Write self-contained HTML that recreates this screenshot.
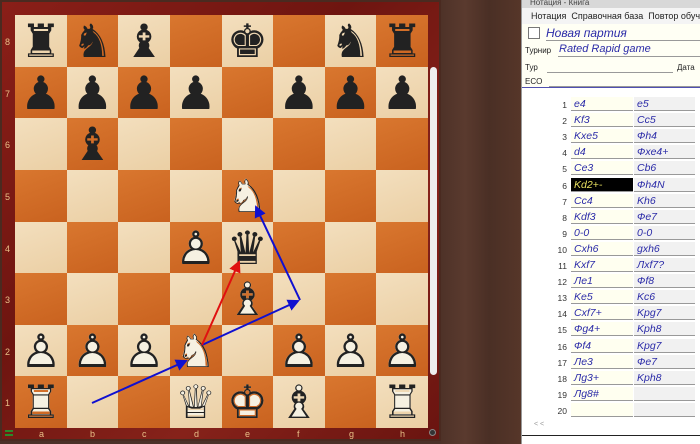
<!DOCTYPE html>
<html><head><meta charset="utf-8"><style>
*{margin:0;padding:0;box-sizing:border-box}
body{width:700px;height:444px;overflow:hidden;background:#4b3128;font-family:"Liberation Sans","DejaVu Sans",sans-serif;position:relative}
#wood{position:absolute;left:441px;top:0;width:80px;height:444px;background:linear-gradient(90deg,#4e3228,#5a3a2e 30%,#4a2f25 60%,#563629)}
#frame{position:absolute;left:0;top:0;width:441px;height:441px;background:linear-gradient(135deg,#8a1f18,#6e1510 40%,#86221a 70%,#6a1410);border:2px solid #4a2a20}
#board{position:absolute;left:15px;top:15px;width:413px;height:413px}
.sq{position:absolute;width:51.625px;height:51.625px}
.l{background:linear-gradient(160deg,#f3dfbe,#ebcfa4)}
.d{background:linear-gradient(160deg,#d9772f,#c9621f)}
.p{position:absolute;width:51.625px;height:51.625px;text-align:center;line-height:52px;font-family:"DejaVu Sans",sans-serif;font-size:46px;font-variant-emoji:text}
.b{color:#222}
.wf{color:#f6f1e2}
.wo{color:#222}
.rk{position:absolute;left:5px;color:#e8c088;font-size:9px}
.fl{position:absolute;top:429px;color:#e8c088;font-size:9px}
#sb{position:absolute;left:430px;top:67px;width:7px;height:308px;background:#eee;border-radius:4px}
#panel{position:absolute;left:521px;top:0;width:179px;height:444px;background:#fff;border-left:1px solid #999}
#title{height:8px;background:#d8d8d8;font-size:8px;color:#444;line-height:6px;padding-left:8px;overflow:hidden}
#menu{height:16px;background:#f4f4f4;font-size:9px;line-height:16px;padding-left:9px;white-space:nowrap;color:#222}
#hdr{height:64px;background:#fffff4;position:relative;border-bottom:1px solid #5050b0}
.hi{font-style:italic;color:#2b2ba8;position:absolute}
.lab{position:absolute;font-size:8px;color:#222}
.ul{position:absolute;height:1px;background:#999}
.row{position:absolute;left:0;height:16px;width:179px;font-size:10.5px}
.n{position:absolute;right:134px;top:3px;font-size:8.5px;color:#333}
.wm{position:absolute;left:49px;width:62px;height:14px;background:#fffff0;border-bottom:1.5px solid #999;color:#2b2ba8;font-style:italic;padding-left:3px;line-height:14px}
.bm{position:absolute;left:112px;width:61px;height:14px;background:#f1f1f1;border-bottom:1.5px solid #999;color:#2b2ba8;font-style:italic;padding-left:3px;line-height:14px}
</style></head><body>
<div id="wood"></div>
<div id="frame"></div>
<div id="board">
<div class="sq l" style="left:0;top:0"></div><div class="sq d" style="left:51.6px;top:0"></div><div class="sq l" style="left:103.2px;top:0"></div><div class="sq d" style="left:154.9px;top:0"></div><div class="sq l" style="left:206.5px;top:0"></div><div class="sq d" style="left:258.1px;top:0"></div><div class="sq l" style="left:309.7px;top:0"></div><div class="sq d" style="left:361.4px;top:0"></div>
<div class="sq d" style="left:0;top:51.6px"></div><div class="sq l" style="left:51.6px;top:51.6px"></div><div class="sq d" style="left:103.2px;top:51.6px"></div><div class="sq l" style="left:154.9px;top:51.6px"></div><div class="sq d" style="left:206.5px;top:51.6px"></div><div class="sq l" style="left:258.1px;top:51.6px"></div><div class="sq d" style="left:309.7px;top:51.6px"></div><div class="sq l" style="left:361.4px;top:51.6px"></div>
<div class="sq l" style="left:0;top:103.2px"></div><div class="sq d" style="left:51.6px;top:103.2px"></div><div class="sq l" style="left:103.2px;top:103.2px"></div><div class="sq d" style="left:154.9px;top:103.2px"></div><div class="sq l" style="left:206.5px;top:103.2px"></div><div class="sq d" style="left:258.1px;top:103.2px"></div><div class="sq l" style="left:309.7px;top:103.2px"></div><div class="sq d" style="left:361.4px;top:103.2px"></div>
<div class="sq d" style="left:0;top:154.9px"></div><div class="sq l" style="left:51.6px;top:154.9px"></div><div class="sq d" style="left:103.2px;top:154.9px"></div><div class="sq l" style="left:154.9px;top:154.9px"></div><div class="sq d" style="left:206.5px;top:154.9px"></div><div class="sq l" style="left:258.1px;top:154.9px"></div><div class="sq d" style="left:309.7px;top:154.9px"></div><div class="sq l" style="left:361.4px;top:154.9px"></div>
<div class="sq l" style="left:0;top:206.5px"></div><div class="sq d" style="left:51.6px;top:206.5px"></div><div class="sq l" style="left:103.2px;top:206.5px"></div><div class="sq d" style="left:154.9px;top:206.5px"></div><div class="sq l" style="left:206.5px;top:206.5px"></div><div class="sq d" style="left:258.1px;top:206.5px"></div><div class="sq l" style="left:309.7px;top:206.5px"></div><div class="sq d" style="left:361.4px;top:206.5px"></div>
<div class="sq d" style="left:0;top:258.1px"></div><div class="sq l" style="left:51.6px;top:258.1px"></div><div class="sq d" style="left:103.2px;top:258.1px"></div><div class="sq l" style="left:154.9px;top:258.1px"></div><div class="sq d" style="left:206.5px;top:258.1px"></div><div class="sq l" style="left:258.1px;top:258.1px"></div><div class="sq d" style="left:309.7px;top:258.1px"></div><div class="sq l" style="left:361.4px;top:258.1px"></div>
<div class="sq l" style="left:0;top:309.7px"></div><div class="sq d" style="left:51.6px;top:309.7px"></div><div class="sq l" style="left:103.2px;top:309.7px"></div><div class="sq d" style="left:154.9px;top:309.7px"></div><div class="sq l" style="left:206.5px;top:309.7px"></div><div class="sq d" style="left:258.1px;top:309.7px"></div><div class="sq l" style="left:309.7px;top:309.7px"></div><div class="sq d" style="left:361.4px;top:309.7px"></div>
<div class="sq d" style="left:0;top:361.4px"></div><div class="sq l" style="left:51.6px;top:361.4px"></div><div class="sq d" style="left:103.2px;top:361.4px"></div><div class="sq l" style="left:154.9px;top:361.4px"></div><div class="sq d" style="left:206.5px;top:361.4px"></div><div class="sq l" style="left:258.1px;top:361.4px"></div><div class="sq d" style="left:309.7px;top:361.4px"></div><div class="sq l" style="left:361.4px;top:361.4px"></div>
<div class="p b" style="left:0;top:0">♜</div><div class="p b" style="left:51.6px;top:0">♞</div><div class="p b" style="left:103.2px;top:0">♝</div><div class="p b" style="left:206.5px;top:0">♚</div><div class="p b" style="left:309.7px;top:0">♞</div><div class="p b" style="left:361.4px;top:0">♜</div>
<div class="p b" style="left:0;top:51.6px">♟</div><div class="p b" style="left:51.6px;top:51.6px">♟</div><div class="p b" style="left:103.2px;top:51.6px">♟</div><div class="p b" style="left:154.9px;top:51.6px">♟</div><div class="p b" style="left:258.1px;top:51.6px">♟</div><div class="p b" style="left:309.7px;top:51.6px">♟</div><div class="p b" style="left:361.4px;top:51.6px">♟</div>
<div class="p b" style="left:51.6px;top:103.2px">♝</div>
<div class="p b" style="left:206.5px;top:206.5px">♛</div>
<div class="p wf" style="left:206.5px;top:154.9px">♞</div><div class="p wo" style="left:206.5px;top:154.9px">♘</div>
<div class="p wf" style="left:154.9px;top:206.5px">♟</div><div class="p wo" style="left:154.9px;top:206.5px">♙</div>
<div class="p wf" style="left:206.5px;top:258.1px">♝</div><div class="p wo" style="left:206.5px;top:258.1px">♗</div>
<div class="p wf" style="left:0;top:309.7px">♟</div><div class="p wo" style="left:0;top:309.7px">♙</div>
<div class="p wf" style="left:51.6px;top:309.7px">♟</div><div class="p wo" style="left:51.6px;top:309.7px">♙</div>
<div class="p wf" style="left:103.2px;top:309.7px">♟</div><div class="p wo" style="left:103.2px;top:309.7px">♙</div>
<div class="p wf" style="left:154.9px;top:309.7px">♞</div><div class="p wo" style="left:154.9px;top:309.7px">♘</div>
<div class="p wf" style="left:258.1px;top:309.7px">♟</div><div class="p wo" style="left:258.1px;top:309.7px">♙</div>
<div class="p wf" style="left:309.7px;top:309.7px">♟</div><div class="p wo" style="left:309.7px;top:309.7px">♙</div>
<div class="p wf" style="left:361.4px;top:309.7px">♟</div><div class="p wo" style="left:361.4px;top:309.7px">♙</div>
<div class="p wf" style="left:0;top:361.4px">♜</div><div class="p wo" style="left:0;top:361.4px">♖</div>
<div class="p wf" style="left:154.9px;top:361.4px">♛</div><div class="p wo" style="left:154.9px;top:361.4px">♕</div>
<div class="p wf" style="left:206.5px;top:361.4px">♚</div><div class="p wo" style="left:206.5px;top:361.4px">♔</div>
<div class="p wf" style="left:258.1px;top:361.4px">♝</div><div class="p wo" style="left:258.1px;top:361.4px">♗</div>
<div class="p wf" style="left:361.4px;top:361.4px">♜</div><div class="p wo" style="left:361.4px;top:361.4px">♖</div>
</div>
<svg style="position:absolute;left:0;top:0" width="441" height="441">
<defs><marker id="ab" markerWidth="6" markerHeight="6" refX="5" refY="3" orient="auto"><path d="M0,0 L6,3 L0,6 Z" fill="#1010d0"/></marker>
<marker id="ar" markerWidth="6" markerHeight="6" refX="5" refY="3" orient="auto"><path d="M0,0 L6,3 L0,6 Z" fill="#e01010"/></marker></defs>
<line x1="92" y1="403" x2="186" y2="361" stroke="#1010d0" stroke-width="2" marker-end="url(#ab)"/>
<line x1="202" y1="345" x2="298" y2="301" stroke="#1010d0" stroke-width="2" marker-end="url(#ab)"/>
<line x1="300" y1="300" x2="256" y2="207" stroke="#1010d0" stroke-width="2" marker-end="url(#ab)"/>
<line x1="202" y1="345" x2="239" y2="262" stroke="#e01010" stroke-width="2" marker-end="url(#ar)"/>
</svg>
<div class="rk" style="top:37px">8</div><div class="rk" style="top:89px">7</div><div class="rk" style="top:140px">6</div><div class="rk" style="top:192px">5</div><div class="rk" style="top:244px">4</div><div class="rk" style="top:295px">3</div><div class="rk" style="top:347px">2</div><div class="rk" style="top:398px">1</div>
<div class="fl" style="left:39px">a</div><div class="fl" style="left:90px">b</div><div class="fl" style="left:142px">c</div><div class="fl" style="left:194px">d</div><div class="fl" style="left:245px">e</div><div class="fl" style="left:297px">f</div><div class="fl" style="left:349px">g</div><div class="fl" style="left:400px">h</div>
<div style="position:absolute;left:5px;top:430px;width:8px;height:6px;border-top:2px solid #2a8a2a;border-bottom:2px solid #2a8a2a"></div>
<div style="position:absolute;left:429px;top:429px;width:7px;height:7px;border-radius:50%;background:#333;border:1px solid #888"></div>
<div id="sb"></div>
<div id="panel">
<div id="title">Нотация - Книга</div>
<div id="menu">Нотация&nbsp; Справочная база&nbsp; Повтор обучения</div>
<div id="hdr">
<div style="position:absolute;left:6px;top:3px;width:12px;height:12px;border:1px solid #777;background:#fff"></div>
<div class="hi" style="left:24px;top:2px;font-size:12px">Новая партия</div>
<div class="ul" style="left:24px;top:16px;width:155px"></div>
<div class="lab" style="left:3px;top:22px">Турнир</div>
<div class="hi" style="left:37px;top:19px;font-size:11px">Rated Rapid game</div>
<div class="ul" style="left:36px;top:32px;width:143px"></div>
<div class="lab" style="left:3px;top:39px">Тур</div>
<div class="ul" style="left:25px;top:48px;width:126px"></div>
<div class="lab" style="left:155px;top:39px">Дата</div>
<div class="lab" style="left:3px;top:53px">ECO</div>
<div class="ul" style="left:27px;top:62px;width:152px"></div>
</div>
<div style="position:absolute;left:0;top:97px;width:179px">
<div class="row" style="top:0"><span class="n">1</span><div class="wm">e4</div><div class="bm">e5</div></div>
<div class="row" style="top:16.1px"><span class="n">2</span><div class="wm">Kf3</div><div class="bm">Cc5</div></div>
<div class="row" style="top:32.2px"><span class="n">3</span><div class="wm">Kxe5</div><div class="bm">Фh4</div></div>
<div class="row" style="top:48.3px"><span class="n">4</span><div class="wm">d4</div><div class="bm">Фxe4+</div></div>
<div class="row" style="top:64.4px"><span class="n">5</span><div class="wm">Ce3</div><div class="bm">Cb6</div></div>
<div class="row" style="top:80.5px"><span class="n">6</span><div class="wm" style="background:#000;color:#e8e060">Kd2+-</div><div class="bm">Фh4N</div></div>
<div class="row" style="top:96.6px"><span class="n">7</span><div class="wm">Cc4</div><div class="bm">Kh6</div></div>
<div class="row" style="top:112.7px"><span class="n">8</span><div class="wm">Kdf3</div><div class="bm">Фe7</div></div>
<div class="row" style="top:128.8px"><span class="n">9</span><div class="wm">0-0</div><div class="bm">0-0</div></div>
<div class="row" style="top:144.9px"><span class="n">10</span><div class="wm">Cxh6</div><div class="bm">gxh6</div></div>
<div class="row" style="top:161px"><span class="n">11</span><div class="wm">Kxf7</div><div class="bm">Лxf7?</div></div>
<div class="row" style="top:177.1px"><span class="n">12</span><div class="wm">Лe1</div><div class="bm">Фf8</div></div>
<div class="row" style="top:193.2px"><span class="n">13</span><div class="wm">Ke5</div><div class="bm">Kc6</div></div>
<div class="row" style="top:209.3px"><span class="n">14</span><div class="wm">Cxf7+</div><div class="bm">Kpg7</div></div>
<div class="row" style="top:225.4px"><span class="n">15</span><div class="wm">Фg4+</div><div class="bm">Kph8</div></div>
<div class="row" style="top:241.5px"><span class="n">16</span><div class="wm">Фf4</div><div class="bm">Kpg7</div></div>
<div class="row" style="top:257.6px"><span class="n">17</span><div class="wm">Лe3</div><div class="bm">Фe7</div></div>
<div class="row" style="top:273.7px"><span class="n">18</span><div class="wm">Лg3+</div><div class="bm">Kph8</div></div>
<div class="row" style="top:289.8px"><span class="n">19</span><div class="wm">Лg8#</div><div class="bm"></div></div>
<div class="row" style="top:305.9px"><span class="n">20</span><div class="wm"></div><div class="bm"></div></div>
</div>
<div style="position:absolute;left:12px;top:421px;font-size:7px;color:#999">&lt; &lt;</div>
<div style="position:absolute;left:0;top:435px;width:179px;height:1px;background:#222"></div>
</div>
</body></html>
